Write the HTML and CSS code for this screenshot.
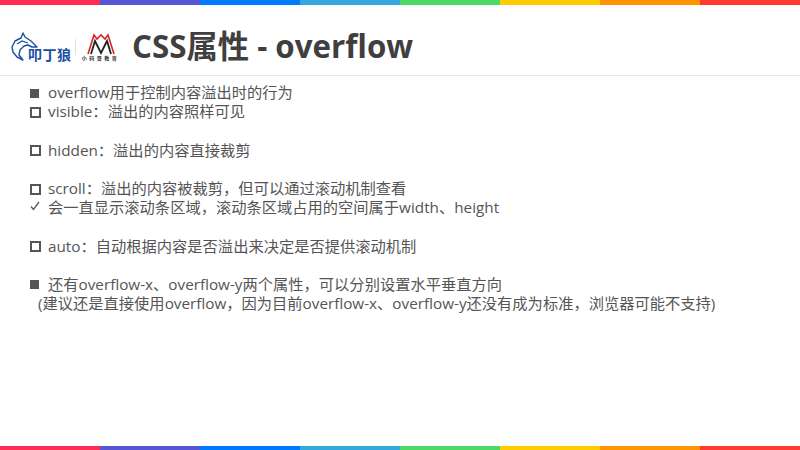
FILE: index.html
```html
<!DOCTYPE html>
<html>
<head>
    <title>CSS属性 - overflow</title>
    <link rel="stylesheet" href="styles.css">
</head>
<body>
<div class="rainbow">
    <span class="c1"></span><span class="c2"></span><span class="c3"></span><span class="c4"></span>
    <span class="c5"></span><span class="c6"></span><span class="c7"></span><span class="c8"></span>
</div>

<div class="header">
    <div class="logo-wolf">
        <svg class="wolf-head" width="28" height="30" viewBox="0 0 28 30">
            <path d="M12 1 L14 5 L20 9 L26 15 L21 15 L17 13 L13 14 L9 18 L8 23 L12 28 L6 25 L2 20 L1 15 L4 9 L10 6 Z" fill="#fff" stroke="#1a4fa3" stroke-width="1.4" stroke-linejoin="round"/>
            <path d="M6 12 L11 9 L17 11" fill="none" stroke="#1a4fa3" stroke-width="1.2"/>
        </svg>
        <span class="wolf-name">叩丁狼</span>
    </div>
    <div class="logo-sep"></div>
    <div class="logo-mage">
        <svg width="28" height="22" viewBox="0 0 28 22">
            <path d="M1 21 L7 2 L10 6 L14 2 L18 6 L21 2 L27 21" fill="none" stroke="#d8232a" stroke-width="1.6"/>
            <path d="M4 21 L8 8 L14 20 L20 8 L24 21" fill="none" stroke="#222" stroke-width="1.8"/>
        </svg>
        <span class="mage-name">小码哥教育</span>
    </div>
    <h1>CSS属性 - overflow</h1>
</div>

<div class="content">
    <div class="row"><i class="mark solid"></i><p>overflow用于控制内容溢出时的行为</p></div>
    <div class="row"><i class="mark hollow"></i><p>visible：溢出的内容照样可见</p></div>
    <div class="row blank"></div>
    <div class="row"><i class="mark hollow"></i><p>hidden：溢出的内容直接裁剪</p></div>
    <div class="row blank"></div>
    <div class="row"><i class="mark hollow"></i><p>scroll：溢出的内容被裁剪，但可以通过滚动机制查看</p></div>
    <div class="row"><svg class="check" width="10" height="10" viewBox="0 0 10 10"><path d="M1 5.5 L3.5 8.5 L9 1" fill="none" stroke="#555" stroke-width="1.3"/></svg><p>会一直显示滚动条区域，滚动条区域占用的空间属于width、height</p></div>
    <div class="row blank"></div>
    <div class="row"><i class="mark hollow"></i><p>auto：自动根据内容是否溢出来决定是否提供滚动机制</p></div>
    <div class="row blank"></div>
    <div class="row"><i class="mark solid"></i><p>还有overflow-x、overflow-y两个属性，可以分别设置水平垂直方向</p></div>
    <div class="row note"><p>(建议还是直接使用overflow，因为目前overflow-x、overflow-y还没有成为标准，浏览器可能不支持)</p></div>
</div>

<div class="rainbow bottom">
    <span class="c1"></span><span class="c2"></span><span class="c3"></span><span class="c4"></span>
    <span class="c5"></span><span class="c6"></span><span class="c7"></span><span class="c8"></span>
</div>
</body>
</html>
```

FILE: styles.css
```css
* {
    padding: 0;
    margin: 0;
    box-sizing: border-box;
}

body {
    width: 800px;
    height: 450px;
    overflow: hidden;
    display: flex;
    flex-direction: column;
    background-color: #fff;
    color: #555;
    font-family: "Open Sans", "Noto Sans CJK SC", sans-serif;
}

.rainbow {
    display: flex;
    height: 5px;
    flex: none;
}

.rainbow span {
    flex: 1;
}

.rainbow.bottom {
    height: 4px;
}

.c1 { background-color: #ff2d55; }
.c2 { background-color: #5856d6; }
.c3 { background-color: #007aff; }
.c4 { background-color: #34aadc; }
.c5 { background-color: #4cd964; }
.c6 { background-color: #ffcc00; }
.c7 { background-color: #ff9500; }
.c8 { background-color: #ff3b30; }

.header {
    height: 71px;
    flex: none;
    display: flex;
    align-items: center;
    padding: 14px 0 0 11px;
    border-bottom: 1px solid #e8e8e8;
}

.logo-wolf {
    width: 62px;
    height: 30px;
    display: flex;
    align-items: flex-end;
}

.wolf-head {
    flex: none;
}

.wolf-name {
    margin-left: -11px;
    color: #1a4fa3;
    font-size: 14px;
    line-height: 15px;
    font-weight: 700;
    letter-spacing: 0.5px;
    white-space: nowrap;
}

.logo-sep {
    width: 1px;
    height: 16px;
    margin: 0 5px 0 2px;
    background-color: #e2e2e2;
}

.logo-mage {
    width: 39px;
    height: 29px;
    display: flex;
    flex-direction: column;
    align-items: center;
}

.mage-name {
    color: #333;
    font-size: 5px;
    line-height: 7px;
    font-weight: 700;
    letter-spacing: 2.5px;
    white-space: nowrap;
}

h1 {
    margin: 0 0 2px 12px;
    color: #3f3f3f;
    font-size: 31.3px;
    line-height: 40px;
    font-weight: 700;
    white-space: nowrap;
}

.content {
    flex: 1;
    padding: 5.5px 0 0 30px;
}

.row {
    display: flex;
    align-items: center;
    height: 19.2px;
    font-size: 15.27px;
    white-space: nowrap;
}

.mark {
    flex: none;
    margin-top: 4px;
}

.solid {
    width: 9px;
    height: 9px;
    margin-right: 9px;
    background-color: #555;
}

.hollow {
    width: 11px;
    height: 11px;
    margin-right: 7px;
    border: 2px solid #555;
}

.check {
    margin-right: 8px;
    flex: none;
}

.note {
    padding-left: 8px;
}
```
